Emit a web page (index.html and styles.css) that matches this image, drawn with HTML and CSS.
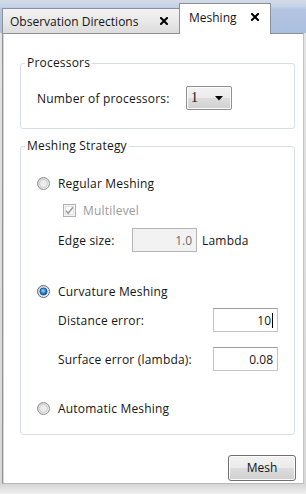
FILE: index.html
```html
<!DOCTYPE html>
<html>
<head>
<meta charset="utf-8">
<link rel="stylesheet" href="styles.css">
</head>
<body>
<div class="window">
  <div class="tabbar">
    <div class="tab">
      <span class="tab-title">Observation Directions</span>
      <svg class="close" width="8" height="8" viewBox="0 0 8 8"><path d="M1 1 L7 7 M7 1 L1 7" stroke="#000" stroke-width="2" stroke-linecap="square"/></svg>
    </div>
    <div class="tab active">
      <span class="tab-title">Meshing</span>
      <svg class="close" width="8" height="8" viewBox="0 0 8 8"><path d="M1 1 L7 7 M7 1 L1 7" stroke="#000" stroke-width="2" stroke-linecap="square"/></svg>
    </div>
  </div>
  <div class="panel">
    <fieldset class="group group-proc">
      <legend>Processors</legend>
      <div class="group-body proc-body">
        <div class="row">
          <span class="proc-label">Number of processors:</span>
          <div class="combo">
            <span class="combo-value">1</span>
            <svg class="combo-arrow" width="8" height="5" viewBox="0 0 8 5"><path d="M0 0 H8 L4 4.5 Z" fill="#000"/></svg>
          </div>
        </div>
      </div>
    </fieldset>

    <fieldset class="group group-strat">
      <legend>Meshing Strategy</legend>
      <div class="group-body strat-body">
        <div class="opt opt-regular">
          <svg class="radio" width="13" height="13" viewBox="0 0 13 13">
            <defs>
              <linearGradient id="rg1" x1="0" y1="0" x2="1" y2="1">
                <stop offset="0" stop-color="#cfcfcf"/>
                <stop offset="1" stop-color="#fafafa"/>
              </linearGradient>
            </defs>
            <circle cx="6.5" cy="6.5" r="6" fill="url(#rg1)" stroke="#8c8c8c"/>
            <circle cx="6.5" cy="6.5" r="4" fill="#ececec" stroke="#c6c6c6" stroke-width="0.8"/>
          </svg>
          <span>Regular Meshing</span>
        </div>

        <div class="sub-check">
          <svg class="check" width="13" height="13" viewBox="0 0 13 13">
            <rect x="0.5" y="0.5" width="12" height="12" fill="#f4f4f4" stroke="#b1b1b1"/>
            <rect x="2.5" y="2.5" width="8" height="8" fill="#fbfbfb" stroke="#e3e3e3"/>
            <path d="M3 6.8 L5.2 9.3 L10 3.2" fill="none" stroke="#9a9a9a" stroke-width="1.4"/>
          </svg>
          <span class="disabled-text">Multilevel</span>
        </div>

        <div class="field field-edge">
          <span class="edge-label">Edge size:</span>
          <div class="input input-disabled">1.0</div>
          <span class="unit">Lambda</span>
        </div>

        <div class="opt opt-curv">
          <svg class="radio" width="13" height="13" viewBox="0 0 13 13">
            <defs>
              <linearGradient id="rg2" x1="0" y1="0" x2="1" y2="1">
                <stop offset="0" stop-color="#cfcfcf"/>
                <stop offset="1" stop-color="#fafafa"/>
              </linearGradient>
              <radialGradient id="dot" cx="0.45" cy="0.4" r="0.6">
                <stop offset="0" stop-color="#9be0ff"/>
                <stop offset="0.55" stop-color="#2c8ad4"/>
                <stop offset="1" stop-color="#0d4b8c"/>
              </radialGradient>
            </defs>
            <circle cx="6.5" cy="6.5" r="6" fill="url(#rg2)" stroke="#5f6b7a"/>
            <circle cx="6.5" cy="6.5" r="3.6" fill="url(#dot)" stroke="#1f4f86" stroke-width="0.8"/>
          </svg>
          <span>Curvature Meshing</span>
        </div>

        <div class="field field-wide field-dist">
          <span>Distance error:</span>
          <div class="input"><span>10</span><span class="caret"></span></div>
        </div>

        <div class="field field-wide field-surf">
          <span>Surface error (lambda):</span>
          <div class="input">0.08</div>
        </div>

        <div class="opt opt-auto">
          <svg class="radio" width="13" height="13" viewBox="0 0 13 13">
            <defs>
              <linearGradient id="rg3" x1="0" y1="0" x2="1" y2="1">
                <stop offset="0" stop-color="#cfcfcf"/>
                <stop offset="1" stop-color="#fafafa"/>
              </linearGradient>
            </defs>
            <circle cx="6.5" cy="6.5" r="6" fill="url(#rg3)" stroke="#8c8c8c"/>
            <circle cx="6.5" cy="6.5" r="4" fill="#ececec" stroke="#c6c6c6" stroke-width="0.8"/>
          </svg>
          <span>Automatic Meshing</span>
        </div>
      </div>
    </fieldset>

    <div class="actions">
      <button class="btn">Mesh</button>
    </div>
  </div>
</div>
</body>
</html>
```

FILE: styles.css
```css
html, body {
  margin: 0;
  padding: 0;
}
body {
  width: 306px;
  height: 494px;
  overflow: hidden;
  font-family: "Open Sans", "Noto Sans", sans-serif;
  font-size: 12px;
  letter-spacing: 0.2px;
  color: #151515;
  background: linear-gradient(to bottom, #e4e4e4 0, #d8d8d8 485px, #f0f0f0 494px);
}
.window {
  display: flex;
  flex-direction: column;
}

/* Tabs */
.tabbar {
  height: 33px;
  display: flex;
  align-items: flex-end;
  padding-left: 2px;
  background: linear-gradient(to bottom, #d3dbe6 0, #c3d1e6 7px, #b2c6e2 9px, #aabfdf 100%);
}
.tab {
  box-sizing: border-box;
  height: 25px;
  width: 178px;
  display: flex;
  align-items: center;
  padding: 0 11px 0 7px;
  border: 1px solid #8d9196;
  border-bottom: none;
  background: linear-gradient(to bottom, #f3f3f3 0, #e9e9e9 50%, #dcdcdc 100%);
  font-size: 12px;
  letter-spacing: 0;
}
.tab .close {
  margin-left: auto;
}
.tab.active {
  position: relative;
  z-index: 1;
  height: 31px;
  width: 92px;
  margin-left: -1px;
  margin-bottom: -1px;
  padding: 0 11px 4px 9px;
  background: #fff;
  border-color: #8d9196;
}

/* Panel */
.panel {
  box-sizing: border-box;
  margin-left: 2px;
  width: 302px;
  height: 451px;
  background: #fff;
  border-top: 1px solid #8d9196;
  border-left: 1px solid #8f9398;
  border-right: 1px solid #c4c4c4;
  border-bottom: 1px solid #b8b8b8;
  box-shadow: inset 1px 0 0 #d6d6d6;
  padding: 21px 8px 0 17px;
  display: flex;
  flex-direction: column;
}

/* Group boxes */
.group {
  margin: 0;
  padding: 0;
  border: 1px solid #d5dfe5;
  border-radius: 3px;
  min-width: 0;
}
.group legend {
  padding: 0 2px;
  margin-left: 4px;
  line-height: 16px;
  height: 16px;
  color: #151515;
}
.group-body {
  padding: 0 16px;
}
.proc-body {
  padding-top: 15px;
  padding-bottom: 18px;
}
.group-strat {
  margin-top: 9px;
}
.strat-body {
  padding-top: 20px;
  padding-bottom: 17px;
}

.row {
  display: flex;
  align-items: center;
  height: 24px;
}
.proc-label {
  width: 149px;
}
.combo {
  box-sizing: border-box;
  width: 46px;
  height: 24px;
  border: 1px solid #8e8f8f;
  border-radius: 2px;
  background: linear-gradient(to bottom, #f3f3f3 0, #ebebeb 50%, #dddddd 51%, #d0d0d0 100%);
  box-shadow: inset 0 0 0 1px #fbfbfb;
  display: flex;
  align-items: center;
  padding: 0 8px 0 4px;
  font-family: "Liberation Serif", serif;
  font-size: 14px;
}
.combo-arrow {
  margin-left: auto;
}

/* Options */
.opt {
  display: flex;
  align-items: center;
  height: 18px;
}
.opt .radio {
  margin-right: 8px;
  flex: none;
}
.sub-check {
  display: flex;
  align-items: center;
  height: 19px;
  margin-top: 9px;
  padding-left: 26px;
}
.sub-check .check {
  margin-right: 7px;
}
.disabled-text {
  color: #9a9a9a;
}
.field {
  display: flex;
  align-items: center;
  height: 24px;
  padding-left: 21px;
}
.field-edge {
  margin-top: 8px;
}
.edge-label {
  width: 74px;
}
.unit {
  margin-left: 5px;
}
.field-wide {
  justify-content: space-between;
}
.opt-curv {
  margin-top: 30px;
}
.field-dist {
  margin-top: 8px;
}
.field-surf {
  margin-top: 15px;
}
.opt-auto {
  margin-top: 28px;
}

.input {
  box-sizing: border-box;
  width: 65px;
  height: 24px;
  border: 1px solid #c2c4c8;
  border-top-color: #9da0a6;
  background: #fff;
  display: flex;
  align-items: center;
  justify-content: flex-end;
  padding-right: 4px;
  color: #151515;
  letter-spacing: 0;
}
.input-disabled {
  background: #f2f2f2;
  border-color: #b4b4b4;
  color: #6d6d6d;
  padding-right: 4px;
}
.caret {
  display: inline-block;
  width: 1px;
  height: 15px;
  background: #000;
  margin-left: 1px;
}

/* Button */
.actions {
  display: flex;
  justify-content: flex-end;
  margin-top: 20px;
  margin-right: -1px;
}
.btn {
  box-sizing: border-box;
  width: 68px;
  height: 26px;
  border: 1px solid #707070;
  border-radius: 3px;
  background: linear-gradient(to bottom, #f2f2f2 0, #ebebeb 50%, #dddddd 51%, #cfcfcf 100%);
  box-shadow: inset 0 0 0 1px #fcfcfc;
  font-family: "Open Sans", "Noto Sans", sans-serif;
  font-size: 12px;
  color: #151515;
  padding: 0 0 1px 0;
}
```
